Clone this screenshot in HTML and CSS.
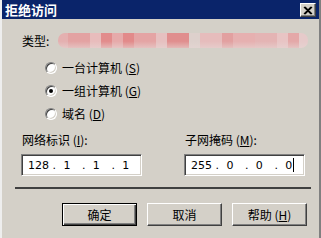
FILE: index.html
```html
<!DOCTYPE html>
<html lang="zh-CN">
<head>
    <meta charset="UTF-8">
    <title>拒绝访问</title>
    <link rel="stylesheet" href="styles.css">
</head>
<body>
    <div class="window">
        <div class="titlebar">
            <span class="title">拒绝访问</span>
            <button class="close-btn">
                <svg viewBox="0 0 10 9" width="10" height="9">
                    <path d="M1 1 L8 8 M2 1 L9 8 M8 1 L1 8 M9 1 L2 8" stroke="#000" stroke-width="1.2"/>
                </svg>
            </button>
        </div>

        <div class="content">
            <div class="type-row">
                <span class="label">类型:</span>
                <div class="redacted"></div>
            </div>

            <div class="radios">
                <label class="radio-row"><span class="radio"></span>一台计算机 (<u>S</u>)</label>
                <label class="radio-row"><span class="radio checked"></span>一组计算机 (<u>G</u>)</label>
                <label class="radio-row"><span class="radio"></span>域名 (<u>D</u>)</label>
            </div>

            <div class="fields">
                <div class="field">
                    <span class="field-label">网络标识 (<u>I</u>):</span>
                    <div class="ip-box">
                        <span class="oct first">128</span><span class="dot">.</span>
                        <span class="oct">1</span><span class="dot">.</span>
                        <span class="oct">1</span><span class="dot">.</span>
                        <span class="oct">1</span>
                    </div>
                </div>
                <div class="field">
                    <span class="field-label">子网掩码 (<u>M</u>):</span>
                    <div class="ip-box">
                        <span class="oct first">255</span><span class="dot">.</span>
                        <span class="oct">0</span><span class="dot">.</span>
                        <span class="oct">0</span><span class="dot">.</span>
                        <span class="oct">0<span class="caret"></span></span>
                    </div>
                </div>
            </div>

            <div class="separator"></div>

            <div class="buttons">
                <button class="btn default">确定</button>
                <button class="btn">取消</button>
                <button class="btn">帮助 (<u>H</u>)</button>
            </div>
        </div>
    </div>
</body>
</html>
```

FILE: styles.css
```css
body {
    margin: 0;
    padding: 0;
    font-family: "Noto Sans CJK SC", "DejaVu Sans", sans-serif;
    font-size: 12px;
    color: #000;
    background: #d4d0c8;
}
.window {
    width: 321px;
    height: 238px;
    box-sizing: border-box;
    background: #d4d0c8;
    border-left: 2px solid #eeeeee;
    border-right: 2px solid #808080;
    overflow: hidden;
}
.titlebar {
    height: 19px;
    background: #0a246a;
    display: flex;
    align-items: center;
    justify-content: space-between;
    padding-left: 3px;
    padding-right: 3px;
}
.title {
    color: #fff;
    font-weight: bold;
    font-size: 13px;
    line-height: 19px;
}
.close-btn {
    width: 16px;
    height: 14px;
    padding: 0;
    margin-top: 1px;
    background: #d4d0c8;
    border: 1px solid;
    border-color: #fff #404040 #404040 #fff;
    box-shadow: inset -1px -1px #808080;
    display: flex;
    align-items: center;
    justify-content: center;
}
.content {
    padding: 13px 11px 0 17px;
}
.type-row {
    display: flex;
    align-items: center;
    height: 16px;
    padding-left: 3px;
}
.label {
    width: 36px;
}
.redacted {
    width: 250px;
    height: 15px;
    border-radius: 7px;
    background:
        linear-gradient(180deg, rgba(255, 255, 255, 0) 55%, rgba(230, 214, 212, 0.6) 100%),
        linear-gradient(90deg,
            #e4b0b0 0 10px, #e3a2a2 10px 32px, #e8bcbc 32px 43px, #e28c8c 43px 54px,
            #e6aaaa 54px 65px, #e28a8a 65px 76px, #e4a4a4 76px 98px, #e6c0c0 98px 109px,
            #e08e8e 109px 131px, #ddd0cc 131px 142px, #e6bcbc 142px 164px, #e2a0a0 164px 175px,
            #e6b0b0 175px 197px, #e4b4b4 197px 219px, #e8c4c4 219px 230px, #e4a8a8 230px 241px,
            #e6caca 241px 250px);
    filter: blur(0.7px);
}
.radios {
    margin-top: 8px;
    padding-left: 26px;
}
.radio-row {
    display: flex;
    align-items: center;
    height: 23px;
}
.radio {
    width: 10px;
    height: 10px;
    border-radius: 50%;
    background: #fff;
    border: 1px solid;
    border-color: #808080 #fff #fff #808080;
    box-shadow: inset 1px 1px #404040, inset -1px -1px #d4d0c8;
    margin-right: 5px;
    display: flex;
    align-items: center;
    justify-content: center;
}
.radio.checked::after {
    content: "";
    width: 4px;
    height: 4px;
    border-radius: 50%;
    background: #000;
}
u {
    text-decoration: underline;
}
.fields {
    display: grid;
    grid-template-columns: 121px 121px;
    column-gap: 42px;
    margin-top: 8px;
    padding-left: 2px;
}
.field-label {
    display: block;
    height: 14px;
    line-height: 14px;
    padding-left: 1px;
}
.ip-box {
    margin-top: 7px;
    height: 22px;
    box-sizing: border-box;
    background: #fff;
    border: 1px solid;
    border-color: #808080 #fff #fff #808080;
    box-shadow: inset 1px 1px #404040, inset -1px -1px #d4d0c8;
    display: flex;
    align-items: center;
    padding-left: 6px;
    font-family: "DejaVu Sans", sans-serif;
    font-size: 11px;
}
.oct {
    width: 19px;
    display: flex;
    align-items: center;
}
.oct.first {
    width: 25px;
}
.dot {
    width: 11px;
}
.caret {
    display: inline-block;
    width: 1px;
    height: 14px;
    background: #000;
    margin-left: 1px;
}
.separator {
    margin: 11px 0 0 -4px;
    height: 2px;
    background: #404040;
    width: 296px;
}
.buttons {
    display: flex;
    justify-content: flex-end;
    gap: 10px;
    margin-top: 14px;
    padding-right: 1px;
}
.btn {
    width: 75px;
    height: 23px;
    padding: 0;
    background: #d4d0c8;
    border: 1px solid;
    border-color: #fff #404040 #404040 #fff;
    box-shadow: inset -1px -1px #808080;
    font-family: "Noto Sans CJK SC", "DejaVu Sans", sans-serif;
    font-size: 12px;
    color: #000;
}
.btn.default {
    border: 1px solid #000;
    box-shadow: inset 1px 1px #fff, inset -1px -1px #404040, inset -2px -2px #808080;
}
```
